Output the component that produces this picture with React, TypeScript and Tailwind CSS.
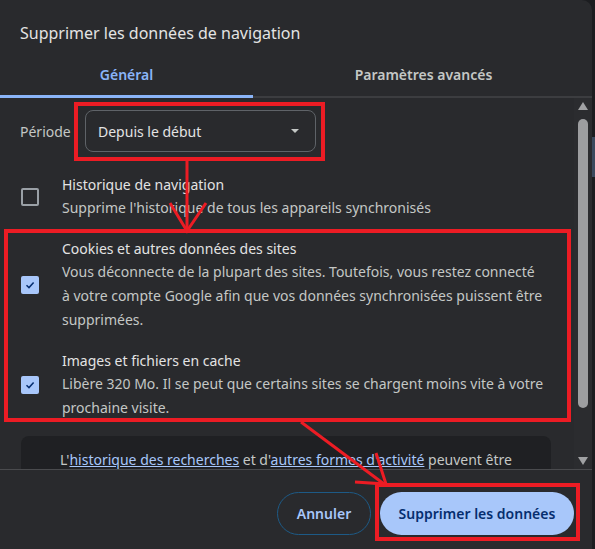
import React from "react";

const font = { fontFamily: '"Noto Sans", "Liberation Sans", Arial, sans-serif' };

function Checkbox({ checked }: { checked: boolean }) {
  if (!checked) {
    return (
      <div className="w-[18px] h-[18px] shrink-0 rounded-[2px] border-2 border-[#9aa0a6]" />
    );
  }
  return (
    <div className="w-[18px] h-[18px] shrink-0 rounded-[2px] bg-[#a8c7fa] flex items-center justify-center">
      <svg width="12" height="12" viewBox="0 0 12 12" aria-hidden="true">
        <path d="M2.5 6.2 L5 8.6 L9.6 3.6" fill="none" stroke="#062e6f" strokeWidth="1.5" />
      </svg>
    </div>
  );
}

function Item({
  checked,
  title,
  lines,
  className,
}: {
  checked: boolean;
  title: string;
  lines: string[];
  className?: string;
}) {
  return (
    <div className={`flex items-center ${className ?? ""}`}>
      <div className="w-[62px] pl-[21px] shrink-0">
        <Checkbox checked={checked} />
      </div>
      <div>
        <div className="text-[14px] leading-[22px] text-[#e3e3e3]">{title}</div>
        {lines.map((l) => (
          <div key={l} className="text-[14px] leading-[24px] text-[#c4c7c5] whitespace-nowrap">
            {l}
          </div>
        ))}
      </div>
    </div>
  );
}

export default function App() {
  return (
    <div className="relative w-[595px] h-[549px] bg-[#1c1d20] overflow-hidden" style={font}>
      <div className="w-[592px] h-full bg-[#292a2d] rounded-tr-[10px] flex flex-col">
        {/* header */}
        <div className="pt-[21px] pl-5 text-[16px] leading-6 text-[#e3e3e3]">
          Supprimer les données de navigation
        </div>
        <div className="mt-2 flex h-[45px]">
          <div className="w-[253px] flex flex-col">
            <div className="flex-1 flex items-center justify-center text-[14px] font-semibold text-[#8ab4f8]">
              Général
            </div>
            <div className="h-[3px] bg-[#8ab4f8]" />
          </div>
          <div className="flex-1 flex flex-col">
            <div className="flex-1 flex items-center justify-center pl-[2px] text-[14px] font-semibold text-[#c4c7c5]">
              Paramètres avancés
            </div>
            <div className="h-[2px] bg-[#3c3d40]" />
          </div>
        </div>

        {/* body */}
        <div className="flex h-[371px]">
          <div className="flex-1 overflow-hidden">
            <div className="flex items-center pt-3">
              <div className="w-[85px] pl-5 text-[14px] text-[#c4c7c5]">Période</div>
              <div className="w-[231px] h-[42px] rounded-lg border border-[#5f6368] flex items-center justify-between pl-3 pr-4">
                <span className="text-[14px] text-[#e3e3e3]">Depuis le début</span>
                <svg width="8" height="4" viewBox="0 0 8 4" aria-hidden="true">
                  <path d="M0 0 L8 0 L4 4 Z" fill="#c4c7c5" />
                </svg>
              </div>
            </div>

            <Item
              className="mt-[22px]"
              checked={false}
              title="Historique de navigation"
              lines={["Supprime l'historique de tous les appareils synchronisés"]}
            />
            <Item
              className="mt-[18px]"
              checked
              title="Cookies et autres données des sites"
              lines={[
                "Vous déconnecte de la plupart des sites. Toutefois, vous restez connecté",
                "à votre compte Google afin que vos données synchronisées puissent être",
                "supprimées.",
              ]}
            />
            <Item
              className="mt-[18px]"
              checked
              title="Images et fichiers en cache"
              lines={[
                "Libère 320 Mo. Il se peut que certains sites se chargent moins vite à votre",
                "prochaine visite.",
              ]}
            />

            <div className="mt-4 ml-[21px] w-[530px] h-[60px] rounded-lg bg-[#1f2023] pt-[14px] text-center text-[14px] leading-5 text-[#c4c7c5] whitespace-nowrap">
              L'
              <span className="underline text-[#a8c7fa]">historique des recherches</span> et d'
              <span className="underline text-[#a8c7fa]">autres formes d'activité</span> peuvent être
            </div>
          </div>

          {/* scrollbar */}
          <div className="w-[18px] bg-[#2b2c2f] flex flex-col items-center pt-1 pb-1">
            <svg width="10" height="8" viewBox="0 0 10 8" aria-hidden="true">
              <path d="M5 0 L10 8 L0 8 Z" fill="#a0a1a3" />
            </svg>
            <div className="mt-[9px] w-[10px] h-[289px] rounded-full bg-[#9d9ea0]" />
            <div className="flex-1" />
            <svg width="10" height="8" viewBox="0 0 10 8" aria-hidden="true">
              <path d="M0 0 L10 0 L5 8 Z" fill="#a0a1a3" />
            </svg>
          </div>
        </div>

        {/* footer */}
        <div className="h-px bg-[#4a4b4e]" />
        <div className="flex justify-end gap-[9px] pr-[18px] pt-[22px]">
          <button className="w-[94px] h-[43px] rounded-full border border-[#1d5a86] text-[14px] font-semibold text-[#a8c7fa]">
            Annuler
          </button>
          <button className="w-[194px] h-[43px] rounded-full bg-[#a8c7fa] text-[14px] font-semibold text-[#062e6f]">
            Supprimer les données
          </button>
        </div>
      </div>

      <div className="absolute right-0 top-[137px] w-[3px] h-[40px] bg-[#3b4a5e]" />

      {/* red annotations */}
      <svg className="absolute inset-0 pointer-events-none" width="595" height="549" aria-hidden="true">
        <g fill="none" stroke="#ec1c24" strokeWidth="4">
          <rect x="76" y="104" width="247" height="55" />
          <rect x="6" y="231" width="563" height="189" />
          <rect x="377" y="485" width="201" height="54" />
          <path d="M187 159 L187 230" strokeWidth="3" />
          <path d="M170 203 L187 231 L206 203" strokeWidth="3" />
          <path d="M301 422 L384 484" strokeWidth="3" />
          <path d="M376 453 L386 484 L355 482" strokeWidth="3" />
        </g>
      </svg>
    </div>
  );
}
